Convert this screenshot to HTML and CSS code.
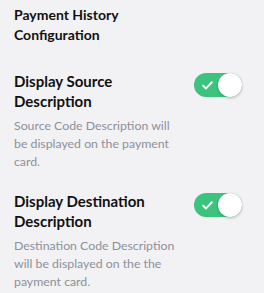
FILE: index.html
```html
<!DOCTYPE html>
<html lang="en">
<head>
    <meta charset="UTF-8">
    <meta name="viewport" content="width=device-width, initial-scale=1.0">
    <title>Payment History Configuration</title>
    <link rel="stylesheet" href="styles.css">
</head>
<body>
    <div class="panel">
        <h2 class="panel-title">Payment History Configuration</h2>

        <div class="setting">
            <div class="setting-text">
                <h3>Display Source Description</h3>
                <p>Source Code Description will be displayed on the payment card.</p>
            </div>
            <label class="toggle">
                <input type="checkbox" checked>
                <span class="track">
                    <svg class="check" width="11" height="9" viewBox="0 0 11 9">
                        <path d="M1.2 4.8 L4 7.4 L9.8 1.4" fill="none" stroke="#fff" stroke-width="2" stroke-linecap="round" stroke-linejoin="round"/>
                    </svg>
                    <span class="knob"></span>
                </span>
            </label>
        </div>

        <div class="setting">
            <div class="setting-text">
                <h3>Display Destination Description</h3>
                <p>Destination Code Description will be displayed on the the payment card.</p>
            </div>
            <label class="toggle">
                <input type="checkbox" checked>
                <span class="track">
                    <svg class="check" width="11" height="9" viewBox="0 0 11 9">
                        <path d="M1.2 4.8 L4 7.4 L9.8 1.4" fill="none" stroke="#fff" stroke-width="2" stroke-linecap="round" stroke-linejoin="round"/>
                    </svg>
                    <span class="knob"></span>
                </span>
            </label>
        </div>
    </div>
</body>
</html>
```

FILE: styles.css
```css
body {
    margin: 0;
    background-color: #f2f2f5;
    font-family: Lato, "Liberation Sans", sans-serif;
    color: #111;
}

.panel {
    padding: 5px 14px 0 14px;
}

.panel-title {
    margin: 0;
    width: 150px;
    font-size: 14px;
    line-height: 20px;
    font-weight: 700;
}

.setting {
    display: flex;
    justify-content: space-between;
    align-items: flex-start;
    margin-top: 26px;
}

.setting + .setting {
    margin-top: 20px;
}

.setting-text {
    width: 170px;
}

.setting-text h3 {
    margin: 0;
    font-size: 15px;
    line-height: 20px;
    font-weight: 700;
}

.setting-text p {
    margin: 6px 0 0 0;
    font-size: 12.3px;
    line-height: 18px;
    color: #8c9099;
}

.toggle {
    margin: 2px 8px 0 0;
    cursor: pointer;
}

.toggle input {
    display: none;
}

.track {
    position: relative;
    display: block;
    width: 48px;
    height: 24px;
    border-radius: 12px;
    background-color: #3cc47e;
}

.check {
    position: absolute;
    left: 8px;
    top: 8px;
}

.knob {
    position: absolute;
    right: 0;
    top: 0;
    width: 24px;
    height: 24px;
    border-radius: 50%;
    background-color: #fff;
    box-shadow: 0 1px 3px rgba(0, 0, 0, 0.25);
}
```
